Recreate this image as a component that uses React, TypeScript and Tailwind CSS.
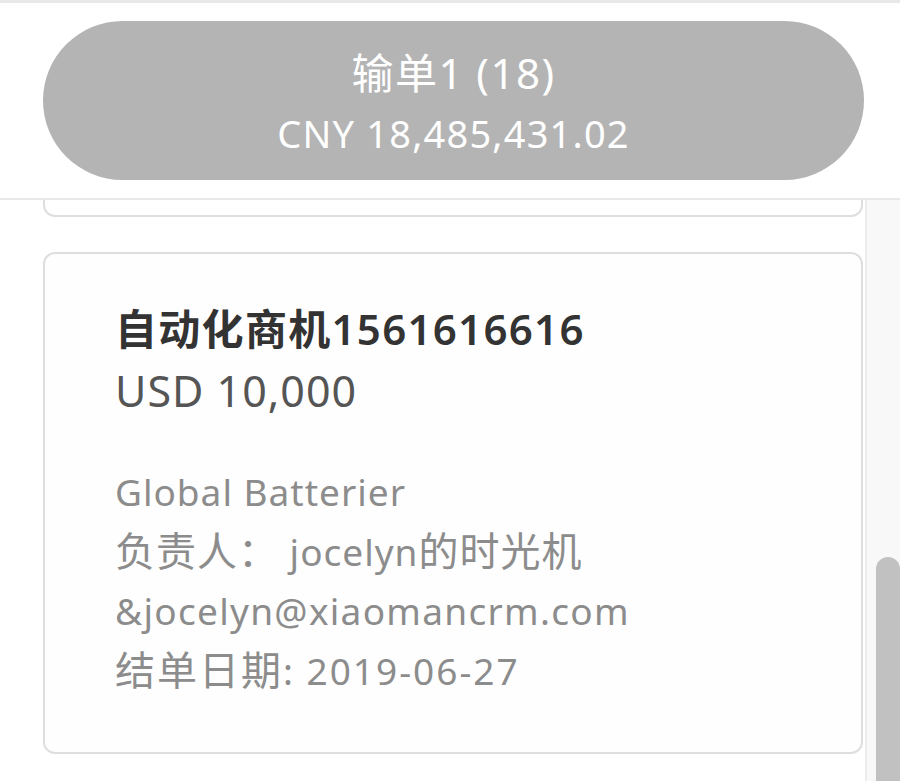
import React from 'react';

const font = { fontFamily: '"Noto Sans", "Noto Sans CJK SC", sans-serif' };

function Han({ children }: { children: React.ReactNode }) {
  return <span className="text-[40px]">{children}</span>;
}

export default function App() {
  return (
    <div className="flex flex-col h-[781px] w-[900px] bg-white overflow-hidden" style={font}>
      {/* Header */}
      <div className="border-t-[3px] border-b-2 border-[#e8e8e8] bg-white px-[43px] pt-[18px] pb-[18px] shrink-0">
        <div className="h-[159px] w-[821px] rounded-full bg-[#b4b4b4] flex flex-col items-center justify-center pt-[5px] text-white">
          <div className="text-[42px] leading-[60px] tracking-[1.5px]">输单1 (18)</div>
          <div className="text-[38px] leading-[60px] tracking-[1.2px]">CNY 18,485,431.02</div>
        </div>
      </div>

      {/* Body */}
      <div className="flex flex-1 min-h-0">
        <div className="flex-1 pl-[43px] pr-[2px]">
          <div className="h-[17px] border-2 border-t-0 border-[#dedede] rounded-b-xl" />
          <div className="mt-[35px] border-2 border-[#dedede] rounded-xl bg-[#fefefe] pl-[70px] pt-[44px] pb-[52px]">
            <div className="text-[42px] leading-[62px] font-semibold tracking-[1.3px] text-[#333]">自动化商机1561616616</div>
            <div className="text-[43px] leading-[62px] tracking-[1px] text-[#555]">USD 10,000</div>
            <div className="mt-[40px] text-[37px] leading-[59px] tracking-[1px] text-[#8c8c8c]">
              <div>Global Batterier</div>
              <div>
                <Han>负责人：</Han> jocelyn<Han>的时光机</Han>
              </div>
              <div className="tracking-[1.3px]">&amp;jocelyn@xiaomancrm.com</div>
              <div className="tracking-[2px]">
                <Han>结单日期</Han>: 2019-06-27
              </div>
            </div>
          </div>
        </div>

        {/* Scrollbar */}
        <div className="w-[35px] border-l-2 border-[#ececec] bg-[#f8f8f8] flex flex-col justify-end items-end">
          <div className="h-[224px] w-[24px] rounded-t-full bg-[#c1c1c1]" />
        </div>
      </div>
    </div>
  );
}
